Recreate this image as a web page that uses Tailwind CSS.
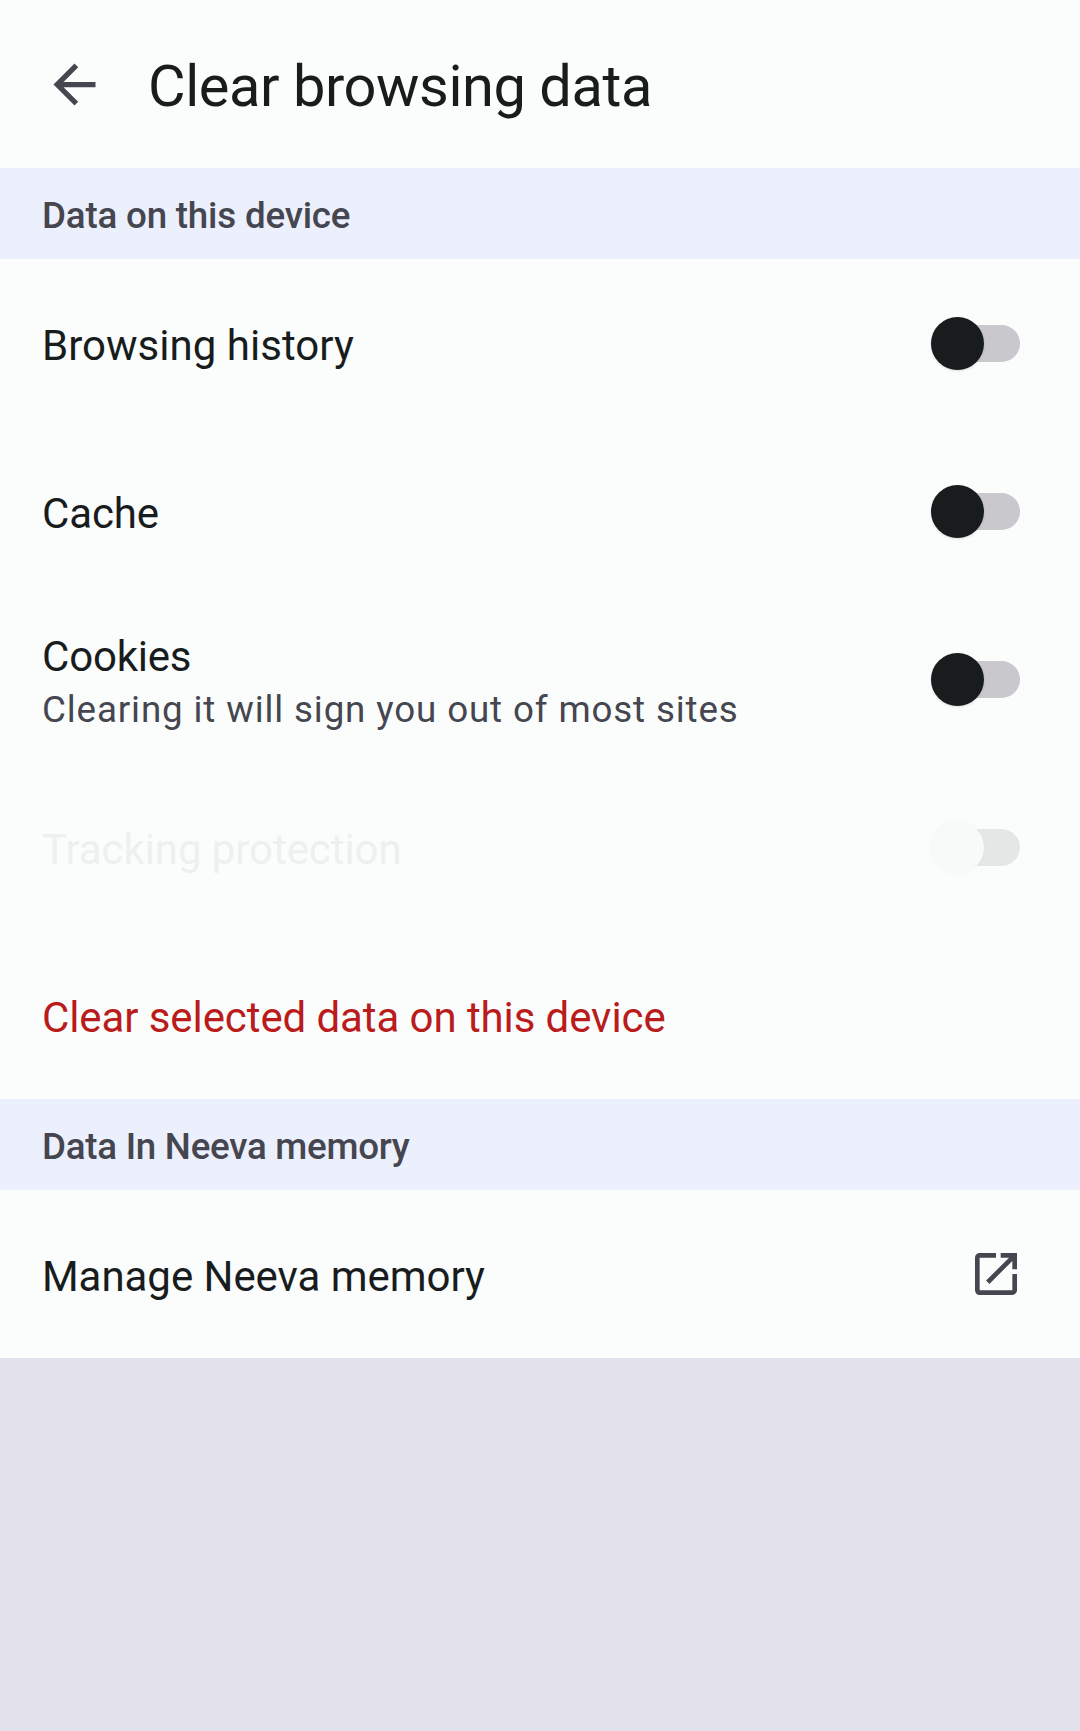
<!DOCTYPE html>
<html lang="en">
<head>
<meta charset="utf-8">
<title>Clear browsing data</title>
<script src="https://cdn.jsdelivr.net/npm/@tailwindcss/browser@4"></script>
</head>
<body class="h-[1731px] overflow-hidden bg-[#e3e1ec] font-['Roboto',sans-serif] text-[#191c1d]">
<main class="bg-[#fbfdfd]">
<header class="flex h-[168px] items-center pl-[43px]">
<svg class="size-[63px] text-[#45464f]" viewBox="0 0 24 24" fill="currentColor"><path d="M20 11H7.83l5.59-5.59L12 4l-8 8 8 8 1.41-1.41L7.83 13H20v-2z"/></svg>
<h1 class="ml-[42px] pt-1 text-[57.75px] leading-[74px] tracking-[-0.43px]">Clear browsing data</h1>
</header>
<h2 class="flex h-[91px] items-center bg-[#ecf0fd] px-[42px] pt-1 text-[36.75px] font-medium tracking-[-0.2px] text-[#45464f]">Data on this device</h2>
<div class="flex h-[168px] items-center justify-between pl-[42px] pr-[60px]"><span class="pt-1 text-[42px] tracking-[0.03px]">Browsing history</span>
<span class="flex h-[37px] w-[89px] items-center rounded-full bg-[#c8c8cd]"><span class="size-[53px] shrink-0 rounded-full bg-[#191c1d] shadow"></span></span></div>
<div class="flex h-[168px] items-center justify-between pl-[42px] pr-[60px]"><span class="pt-1 text-[42px] tracking-[-0.15px]">Cache</span>
<span class="flex h-[37px] w-[89px] items-center rounded-full bg-[#c8c8cd]"><span class="size-[53px] shrink-0 rounded-full bg-[#191c1d] shadow"></span></span></div>
<div class="flex h-[168px] items-center justify-between pl-[42px] pr-[60px]"><div class="pt-2"><p class="text-[42px] leading-[53px] tracking-[-0.2px]">Cookies</p><p class="text-[36.75px] leading-[53px] tracking-[0.86px] text-[#45464f]">Clearing it will sign you out of most sites</p></div>
<span class="flex h-[37px] w-[89px] items-center rounded-full bg-[#c8c8cd]"><span class="size-[53px] shrink-0 rounded-full bg-[#191c1d] shadow"></span></span></div>
<div class="flex h-[168px] items-center justify-between pl-[42px] pr-[60px]"><span class="pt-1 text-[42px] tracking-[-0.07px] text-[#eef0f0]">Tracking protection</span>
<span class="flex h-[37px] w-[89px] items-center rounded-full bg-[#e5e7e6]"><span class="size-[53px] shrink-0 rounded-full bg-[#f8fafa] shadow-[0_0_3px_rgba(0,0,0,0.04)]"></span></span></div>
<div class="flex h-[168px] items-center px-[42px] pt-1 text-[42px] tracking-[-0.09px] text-[#ba1b1b]">Clear selected data on this device</div>
<h2 class="flex h-[91px] items-center bg-[#ecf0fd] px-[42px] pt-1 text-[36.75px] font-medium tracking-[-0.27px] text-[#45464f]">Data In Neeva memory</h2>
<div class="flex h-[168px] items-center justify-between pl-[42px] pr-[56px]"><span class="pt-1 text-[42px] tracking-[-0.05px]">Manage Neeva memory</span>
<svg class="size-14 text-[#45464f]" viewBox="0 0 24 24" fill="currentColor"><path d="M19 19H5V5h7V3H5a2 2 0 0 0-2 2v14a2 2 0 0 0 2 2h14c1.1 0 2-.9 2-2v-7h-2v7zM14 3v2h3.59l-9.83 9.83 1.41 1.41L19 6.41V10h2V3h-7z"/></svg></div>
</main>
</body>
</html>
